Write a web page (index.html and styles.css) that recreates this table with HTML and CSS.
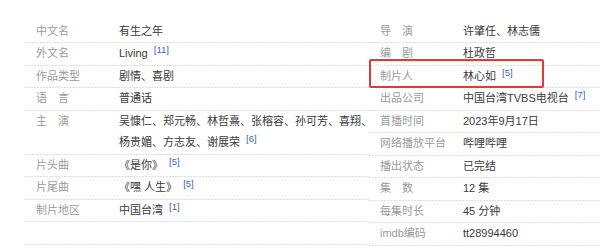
FILE: index.html
```html
<!DOCTYPE html>
<html lang="zh-CN">
<head>
<meta charset="utf-8">
<title>有生之年 基本信息</title>
<link rel="stylesheet" href="styles.css">
</head>
<body>
<div class="info">
  <dl class="col col-left">
    <div class="item"><dt>中文名</dt><dd>有生之年</dd></div>
    <div class="item"><dt>外文名</dt><dd>Living <sup>[11]</sup></dd></div>
    <div class="item"><dt>作品类型</dt><dd>剧情、喜剧</dd></div>
    <div class="item"><dt>语　言</dt><dd>普通话</dd></div>
    <div class="item"><dt>主　演</dt><dd>吴慷仁、郑元畅、林哲熹、张榕容、孙可芳、喜翔、<br>杨贵媚、方志友、谢展荣 <sup>[6]</sup></dd></div>
    <div class="item"><dt>片头曲</dt><dd>《是你》 <sup>[5]</sup></dd></div>
    <div class="item"><dt>片尾曲</dt><dd>《嘿 人生》 <sup>[5]</sup></dd></div>
    <div class="item"><dt>制片地区</dt><dd>中国台湾 <sup>[1]</sup></dd></div>
    <div class="item"><dt>&nbsp;</dt><dd>&nbsp;</dd></div>
  </dl>
  <dl class="col col-right">
    <div class="item"><dt>导　演</dt><dd>许肇任、林志儒</dd></div>
    <div class="item"><dt>编　剧</dt><dd>杜政哲</dd></div>
    <div class="item"><dt>制片人</dt><dd>林心如 <sup>[5]</sup></dd></div>
    <div class="item"><dt>出品公司</dt><dd>中国台湾TVBS电视台 <sup>[7]</sup></dd></div>
    <div class="item"><dt>首播时间</dt><dd>2023年9月17日</dd></div>
    <div class="item"><dt>网络播放平台</dt><dd>哔哩哔哩</dd></div>
    <div class="item"><dt>播出状态</dt><dd>已完结</dd></div>
    <div class="item"><dt>集　数</dt><dd>12 集</dd></div>
    <div class="item"><dt>每集时长</dt><dd>45 分钟</dd></div>
    <div class="item"><dt>imdb编码</dt><dd>tt28994460</dd></div>
    <div class="highlight"></div>
  </dl>
</div>
</body>
</html>
```
FILE: styles.css
```css
html, body {
  margin: 0;
  padding: 0;
  background: #fff;
  overflow: hidden;
}
body {
  font-family: "Liberation Sans", "Noto Sans CJK SC", sans-serif;
  font-size: 11px;
  color: #3a3a3a;
}
.info {
  display: flex;
  padding-top: 20.5px;
  margin-left: 25px;
}
.col {
  margin: 0;
  min-width: 0;
}
.col-left {
  flex: 0 0 344px;
}
.col-right {
  flex: 1 1 auto;
  position: relative;
}
.item {
  display: flex;
  line-height: 21.5px;
  padding-bottom: 1px;
  background-image: repeating-linear-gradient(to right, #dedede 0 2px, transparent 2px 3px);
  background-size: 100% 1px;
  background-position: left bottom;
  background-repeat: no-repeat;
}
dt {
  flex: 0 0 83px;
  padding-left: 11px;
  color: #9a9a9a;
  white-space: nowrap;
}
dd {
  margin: 0;
  white-space: nowrap;
}
sup {
  font-size: 9.5px;
  line-height: 0;
  vertical-align: 4px;
  color: #3366cc;
  margin-left: 3px;
}
.highlight {
  position: absolute;
  left: 0;
  top: 38.5px;
  width: 171px;
  height: 25px;
  border: 2px solid #e03a36;
  border-radius: 2px;
}
```
